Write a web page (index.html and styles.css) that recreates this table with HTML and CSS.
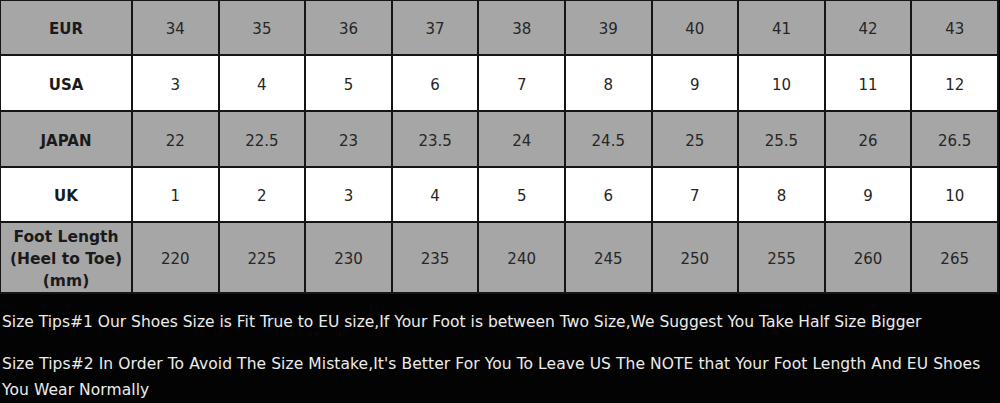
FILE: index.html
```html
<!DOCTYPE html>
<html>
<head>
<meta charset="utf-8">
<link rel="stylesheet" href="styles.css">
</head>
<body>
<table class="chart">
  <colgroup><col class="head-col"><col span="10"></colgroup>
  <tr class="gray r1"><th>EUR</th><td>34</td><td>35</td><td>36</td><td>37</td><td>38</td><td>39</td><td>40</td><td>41</td><td>42</td><td>43</td></tr>
  <tr class="white r2"><th>USA</th><td>3</td><td>4</td><td>5</td><td>6</td><td>7</td><td>8</td><td>9</td><td>10</td><td>11</td><td>12</td></tr>
  <tr class="gray r3"><th>JAPAN</th><td>22</td><td>22.5</td><td>23</td><td>23.5</td><td>24</td><td>24.5</td><td>25</td><td>25.5</td><td>26</td><td>26.5</td></tr>
  <tr class="white r4"><th>UK</th><td>1</td><td>2</td><td>3</td><td>4</td><td>5</td><td>6</td><td>7</td><td>8</td><td>9</td><td>10</td></tr>
  <tr class="gray r5"><th>Foot Length<br>(Heel to Toe)<br>(mm)</th><td>220</td><td>225</td><td>230</td><td>235</td><td>240</td><td>245</td><td>250</td><td>255</td><td>260</td><td>265</td></tr>
</table>
<div class="tips">
  <p class="tip1">Size Tips#1 Our Shoes Size is Fit True to EU size,If Your Foot is between Two Size,We Suggest You Take Half Size Bigger</p>
  <p class="tip2">Size Tips#2 In Order To Avoid The Size Mistake,It's Better For You To Leave US The NOTE that Your Foot Length And EU Shoes You Wear Normally</p>
</div>
</body>
</html>
```
FILE: styles.css
```css
html, body {
  margin: 0;
  padding: 0;
  background: #030303;
  width: 1000px;
  height: 403px;
  overflow: hidden;
}
body {
  font-family: "DejaVu Sans", sans-serif;
}
.chart {
  width: 1000px;
  border-collapse: collapse;
  table-layout: fixed;
  margin-top: -1px;
  margin-left: -1px;
}
.head-col { width: 132px; }
.chart th, .chart td {
  border: 2px solid #151515;
  text-align: center;
  vertical-align: middle;
  padding: 3px 0 0 0;
  color: #262626;
  font-size: 15px;
}
.chart th {
  font-weight: bold;
  font-size: 15px;
  color: #1a1a1a;
  line-height: 22px;
}
.chart td { font-weight: normal; }
.gray th, .gray td { background: #a6a6a6; }
.white th, .white td { background: #ffffff; }
.r1 { height: 55px; }
.r2 { height: 56px; }
.r3 { height: 56px; }
.r4 { height: 55px; }
.r5 { height: 71px; }
.r5 th { padding-top: 2px; line-height: 22px; font-size: 15.5px; }
.tips {
  color: #ececec;
  font-size: 15.5px;
  padding: 0 0 0 2px;
}
.tips p { margin: 0; }
.tip1 { margin-top: 16px !important; line-height: 24px; }
.tip2 { margin-top: 17px !important; line-height: 26px; letter-spacing: 0.08px; }
```
